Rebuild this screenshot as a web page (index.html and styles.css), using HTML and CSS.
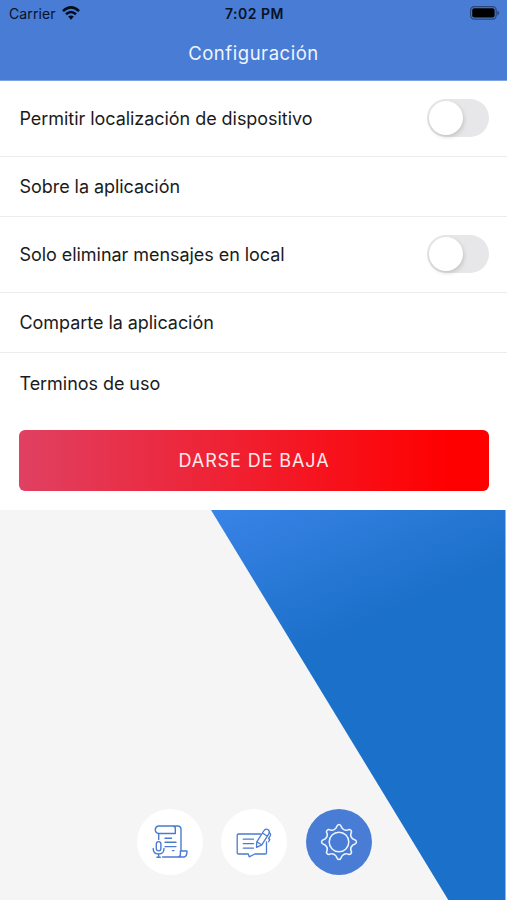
FILE: index.html
```
<!DOCTYPE html>
<html lang="es">
<head>
<meta charset="utf-8">
<meta name="viewport" content="width=device-width, initial-scale=1">
<title>Configuración</title>
<link rel="stylesheet" href="styles.css">
</head>
<body>
<div class="app">
  <header class="header">
    <div class="status">
      <div class="carrier"><span>Carrier</span>
        <svg width="18" height="14" viewBox="0 0 18 14"><g fill="none" stroke="#050d1d" stroke-width="2.6"><path d="M1 5.1Q9-2.3 17 5.1"/><path d="M4 8.2Q9 3.8 14 8.2"/></g><path fill="#050d1d" d="M6.1 10.6Q9 8.2 11.9 10.6L9 13.8Z"/></svg>
      </div>
      <span class="time">7:02 PM</span>
      <svg class="battery" width="30" height="14" viewBox="0 0 30 14"><rect x=".6" y=".6" width="25.6" height="12.6" rx="3.6" fill="none" stroke="#29467c" stroke-width="1.2"/><rect x="2.2" y="2.2" width="22.4" height="9.4" rx="2" fill="#000"/><path fill="#29467c" d="M27.4 4.8Q29.2 5.3 29.2 7T27.4 9.2Z"/></svg>
    </div>
    <h1 class="title">Configuración</h1>
  </header>
  <main class="settings">
    <div class="row tall"><span>Permitir localización de dispositivo</span><span class="toggle"></span></div>
    <div class="row"><span>Sobre la aplicación</span></div>
    <div class="row tall"><span>Solo eliminar mensajes en local</span><span class="toggle"></span></div>
    <div class="row"><span>Comparte la aplicación</span></div>
    <div class="row last"><span>Terminos de uso</span></div>
    <button class="unsubscribe">DARSE DE BAJA</button>
  </main>
  <section class="backdrop">
    <svg class="diagonal" width="507" height="390" viewBox="0 0 507 390">
      <defs><linearGradient id="blue" gradientUnits="userSpaceOnUse" x1="211" y1="0" x2="279" y2="153"><stop offset="0" stop-color="#3983e7"/><stop offset="1" stop-color="#1b70c9"/></linearGradient></defs>
      <path fill="url(#blue)" d="M211 0H505.7V390H448.3Z"/>
      <path fill="#fff" d="M505.7 0H507V390H505.7Z"/>
    </svg>
    <nav class="tabs">
      <a class="tab"><svg width="40" height="40" viewBox="0 0 40 40" fill="none" stroke="#4a7bd1" stroke-width="1.4" stroke-linecap="round" stroke-linejoin="round"><path d="M8.7 17.4V11.5M8.7 11.5H25.3V6.2Q25.3 4 22.8 4H8.4Q5.3 4.6 5.3 7.8T8.7 11.5M22.8 4H27.6Q31 4 31 7.5V29M12.6 35H34.2Q37 34.5 37 29H30.4V32.5Q30.4 35 27.8 35M15 16.2H21.5M15 20.2H26M15 24.6H26M22.5 28.6H24"/><rect x="6.3" y="19.6" width="4.6" height="9.3" rx="2.3"/><path d="M3.2 26.5Q3.2 32 8.6 32T14 26.5M8.6 32V35.2M6.9 35.2H10.3"/></svg></a>
      <a class="tab"><svg width="40" height="40" viewBox="0 0 40 40" fill="none" stroke="#4a7bd1" stroke-width="1.3" stroke-linecap="round" stroke-linejoin="round"><path d="M26.5 12H4.5Q3.2 12 3.2 13.3V30.7Q3.2 32 4.5 32H14.3L15.2 34.8L20.8 32H31.3Q32.5 32 32.5 30.7V20M9.3 17.2H19.5M9.3 21.7H19.5M9.3 26.1H19.5"/><path d="M22.5 25.3L22.8 19.8L29.7 9Q31.3 6.2 33.8 7.5Q36.3 9 34.8 11.8L27.8 22.8L22.5 25.3M28.4 11L33.4 14.2M23 20L27.6 22.8M35.2 10.5Q37.5 12 36.1 14L34.5 16.6L35.9 17.5L34.6 19.8"/></svg></a>
      <a class="tab active"><svg width="40" height="40" viewBox="0 0 40 40" fill="none" stroke="#edf4ff" stroke-width="1.5" stroke-linejoin="round"><circle cx="20" cy="20" r="9.8"/><path d="M16.6 6.5C17.8 5.7 17.5 2.5 20 2.5S22.2 5.7 23.4 6.5C25.2 8.4 26.2 8.9 28.4 8.1C31.2 6.4 33.6 8.8 31.9 11.6C31.1 13.8 31.6 14.8 33.5 16.6C34.3 17.8 37.5 17.5 37.5 20S34.3 22.2 33.5 23.4C31.6 25.2 31.1 26.2 31.9 28.4C33.6 31.2 31.2 33.6 28.4 31.9C26.2 31.1 25.2 31.6 23.4 33.5C22.2 34.3 22.5 37.5 20 37.5S17.8 34.3 16.6 33.5C14.8 31.6 13.8 31.1 11.6 31.9C8.8 33.6 6.4 31.2 8.1 28.4C8.9 26.2 8.4 25.2 6.5 23.4C5.7 22.2 2.5 22.5 2.5 20S5.7 17.8 6.5 16.6C8.4 14.8 8.9 13.8 8.1 11.6C6.4 8.8 8.8 6.4 11.6 8.1C13.8 8.9 14.8 8.4 16.6 6.5Z"/></svg></a>
    </nav>
  </section>
</div>
</body>
</html>
```
FILE: styles.css
```
* { box-sizing: border-box; }
body { margin: 0; background: #fff; color: #1b1b1b; font-family: Inter, "Liberation Sans", sans-serif; }
.app { width: 507px; height: 900px; display: flex; flex-direction: column; overflow: hidden; }
.header { height: 81px; flex: none; background: #487cd5; border-bottom: 1px solid #7fa3e1; }
.status { height: 27px; display: grid; grid-template-columns: 1fr auto 1fr; align-items: center; padding: 0 7px 0 9px; color: #071225; }
.carrier { display: flex; align-items: center; gap: 6px; font-size: 14px; letter-spacing: .1px; }
.carrier svg { margin-top: -2px; }
.time { font-size: 14px; font-weight: 600; letter-spacing: .5px; }
.battery { justify-self: end; margin-top: -1px; }
.title { margin: 0; height: 53px; line-height: 53px; text-align: center; color: #eff5ff; font-size: 18.5px; font-weight: 400; letter-spacing: .55px; }
.settings { height: 429px; flex: none; padding-bottom: 19px; }
.row { height: 60.5px; padding: 0 18.5px 0 19.5px; display: flex; align-items: center; justify-content: space-between; border-bottom: 1px solid #ececee; font-size: 18px; letter-spacing: -.05px; white-space: nowrap; }
.row.tall { height: 75.5px; }
.row.last { height: 60px; border-bottom: 0; }
.toggle { width: 62px; height: 38px; padding: 2px; border-radius: 19px; background: #e7e7e9; }
.toggle::before { content: ""; display: block; width: 34px; height: 34px; border-radius: 50%; background: #fff; box-shadow: 1px 2px 4px rgba(0,0,0,.16); }
.unsubscribe { display: block; width: 470px; height: 60.5px; margin: 17px 18px 0 19px; padding: 0; border: 0; border-radius: 6px; background: linear-gradient(90deg, #e04062, #f00 92%); color: #ffe9ed; font: 400 18px Inter, "Liberation Sans", sans-serif; letter-spacing: .9px; }
.backdrop { flex: 1; display: grid; background: #f5f5f5; }
.diagonal, .tabs { grid-area: 1 / 1; }
.tabs { align-self: end; display: flex; justify-content: center; gap: 18.5px; padding: 0 0 25px 1px; }
.tab { width: 66px; height: 66px; border-radius: 50%; background: #fff; display: flex; align-items: center; justify-content: center; }
.tab.active { background: #487cd5; }
```
